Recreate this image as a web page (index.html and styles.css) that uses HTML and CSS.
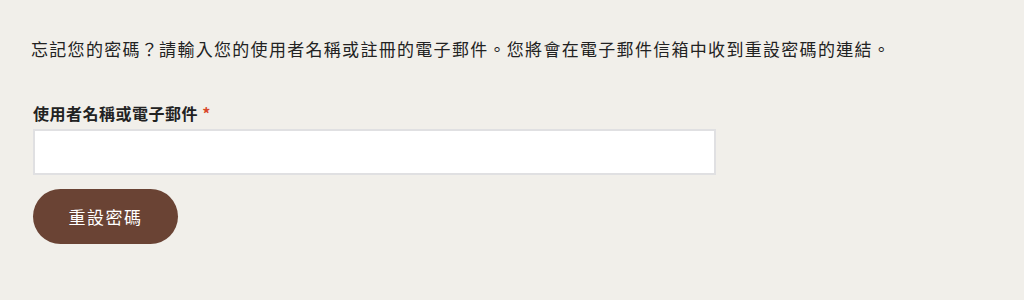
FILE: index.html
```html
<!DOCTYPE html>
<html lang="zh-Hant">
<head>
    <meta charset="UTF-8">
    <meta name="viewport" content="width=device-width, initial-scale=1.0">
    <title>重設密碼</title>
    <link rel="stylesheet" href="styles.css">
</head>
<body>
    <form class="lost-password">
        <p class="intro">忘記您的密碼？請輸入您的使用者名稱或註冊的電子郵件。您將會在電子郵件信箱中收到重設密碼的連結。</p>

        <div class="field">
            <label for="user_login">使用者名稱或電子郵件 <span class="required">*</span></label>
            <input type="text" id="user_login" class="input-text">
        </div>

        <button type="submit" class="reset-button">重設密碼</button>
    </form>
</body>
</html>
```

FILE: styles.css
```css
body {
    margin: 0;
    background: #f1efea;
    color: #222;
    font-family: "Noto Sans CJK TC", "Liberation Sans", sans-serif;
}

.lost-password {
    padding: 35px 31px;
}

.intro {
    margin: 0 0 39px;
    font-size: 17px;
    line-height: 28px;
    letter-spacing: 1.3px;
}

.field {
    display: flex;
    flex-direction: column;
    margin-left: 2px;
}

.field label {
    font-size: 16px;
    font-weight: bold;
    line-height: 22px;
    letter-spacing: 0.5px;
    margin-bottom: 5px;
}

.required {
    color: #d9482b;
}

.input-text {
    width: 683px;
    height: 46px;
    box-sizing: border-box;
    border: 2px solid #e0e0e2;
    background: #fff;
}

.reset-button {
    margin: 14px 0 0 2px;
    width: 145px;
    height: 55px;
    border: none;
    border-radius: 28px;
    background: #6a4334;
    color: #fff;
    font-family: inherit;
    font-size: 17px;
    letter-spacing: 1.5px;
}
```
